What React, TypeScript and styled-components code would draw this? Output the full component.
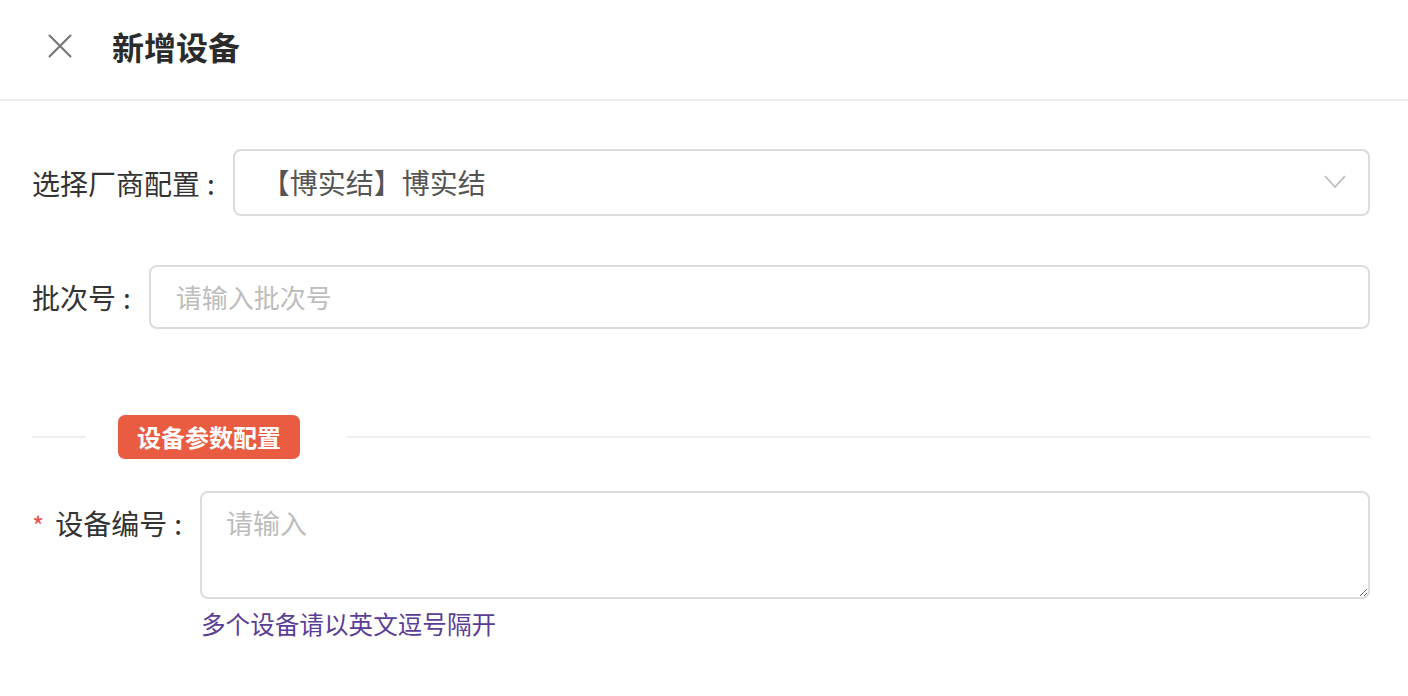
import React from "react";
import styled, { createGlobalStyle } from "styled-components";

const Global = createGlobalStyle`
  html, body { margin: 0; padding: 0; background: #fff; }
  body { font-family: "Noto Sans CJK SC", "Noto Sans", sans-serif; color: #333; }
  * { box-sizing: border-box; }
`;

const Page = styled.div`
  width: 1408px;
  height: 696px;
  background: #fff;
  overflow: hidden;
`;

const Header = styled.header`
  height: 101px;
  display: flex;
  align-items: center;
  padding-left: 47px;
  gap: 39px;
  border-bottom: 2px solid #eeeeee;
`;

const CloseButton = styled.button`
  width: 26px;
  height: 26px;
  padding: 0;
  border: none;
  background: none;
  display: flex;
  align-items: center;
  justify-content: center;
  cursor: pointer;
  margin-top: -8px;
`;

const Title = styled.h1`
  margin: -8px 0 0 0;
  font-size: 32px;
  font-weight: 700;
  color: #2b2b2b;
  line-height: 1;
`;

const Form = styled.div`
  display: flex;
  flex-direction: column;
  padding: 48px 38px 0 32px;
`;

const Row = styled.div<{ $mb: number; $align?: string }>`
  display: flex;
  align-items: ${(p) => p.$align ?? "center"};
  margin-bottom: ${(p) => p.$mb}px;
`;

const Label = styled.label<{ $pt?: number }>`
  font-size: 28px;
  color: #333;
  white-space: nowrap;
  padding-top: ${(p) => p.$pt ?? 0}px;
  display: flex;
  align-items: center;
`;

const Colon = styled.span`
  margin: 0 18px 0 7px;
`;

const Star = styled.span`
  color: #e8523f;
  font-size: 26px;
  margin-right: 11px;
  margin-top: 2px;
`;

const Select = styled.div`
  flex: 1;
  height: 67px;
  border: 2px solid #dcdcdc;
  border-radius: 8px;
  display: flex;
  align-items: center;
  justify-content: space-between;
  padding: 0 22px 2px 27px;
  font-size: 28px;
  color: #555;
`;

const Input = styled.input`
  flex: 1;
  height: 64px;
  border: 2px solid #dcdcdc;
  border-radius: 8px;
  padding: 0 22px 2px 25px;
  font-size: 26px;
  font-family: inherit;
  color: #333;
  outline: none;
  &::placeholder { color: #bdbdbd; }
`;

const FieldColumn = styled.div`
  flex: 1;
  display: flex;
  flex-direction: column;
`;

const TextArea = styled.textarea`
  width: 100%;
  height: 108px;
  border: 2px solid #dcdcdc;
  border-radius: 8px;
  padding: 12px 22px 0 24px;
  font-size: 27px;
  font-family: inherit;
  line-height: 36px;
  color: #333;
  outline: none;
  resize: vertical;
  display: block;
  &::placeholder { color: #bdbdbd; }
`;

const Hint = styled.div`
  font-size: 24.6px;
  color: #5a3d96;
  margin-top: 7px;
  margin-left: 1px;
  line-height: 34px;
`;

const Divider = styled.div`
  display: flex;
  align-items: center;
  margin-bottom: 32px;
`;

const Line = styled.div<{ $w?: number }>`
  height: 2px;
  background: #eeeeee;
  ${(p) => (p.$w ? `width: ${p.$w}px;` : "flex: 1;")}
`;

const Badge = styled.div`
  height: 44px;
  padding: 0 19px 1px;
  margin: 0 47px 0 32px;
  background: #e95c42;
  border-radius: 7px;
  color: #fff;
  font-size: 24px;
  font-weight: 700;
  display: flex;
  align-items: center;
`;

export default function App() {
  return (
    <Page>
      <Global />
      <Header>
        <CloseButton aria-label="close">
          <svg width="26" height="26" viewBox="0 0 26 26">
            <path d="M2 2 L24 24 M24 2 L2 24" stroke="#777" strokeWidth="2.2" fill="none" />
          </svg>
        </CloseButton>
        <Title>新增设备</Title>
      </Header>
      <Form>
        <Row $mb={49}>
          <Label>
            选择厂商配置<Colon>:</Colon>
          </Label>
          <Select>
            <span>【博实结】博实结</span>
            <svg width="22" height="14" viewBox="0 0 22 14">
              <path d="M1 1 L11 12 L21 1" stroke="#bbb" strokeWidth="1.8" fill="none" />
            </svg>
          </Select>
        </Row>
        <Row $mb={86}>
          <Label>
            批次号<Colon>:</Colon>
          </Label>
          <Input placeholder="请输入批次号" />
        </Row>
        <Divider>
          <Line $w={54} />
          <Badge>设备参数配置</Badge>
          <Line />
        </Divider>
        <Row $mb={0} $align="flex-start">
          <Label $pt={12}>
            <Star>*</Star>设备编号<Colon>:</Colon>
          </Label>
          <FieldColumn>
            <TextArea placeholder="请输入" />
            <Hint>多个设备请以英文逗号隔开</Hint>
          </FieldColumn>
        </Row>
      </Form>
    </Page>
  );
}
